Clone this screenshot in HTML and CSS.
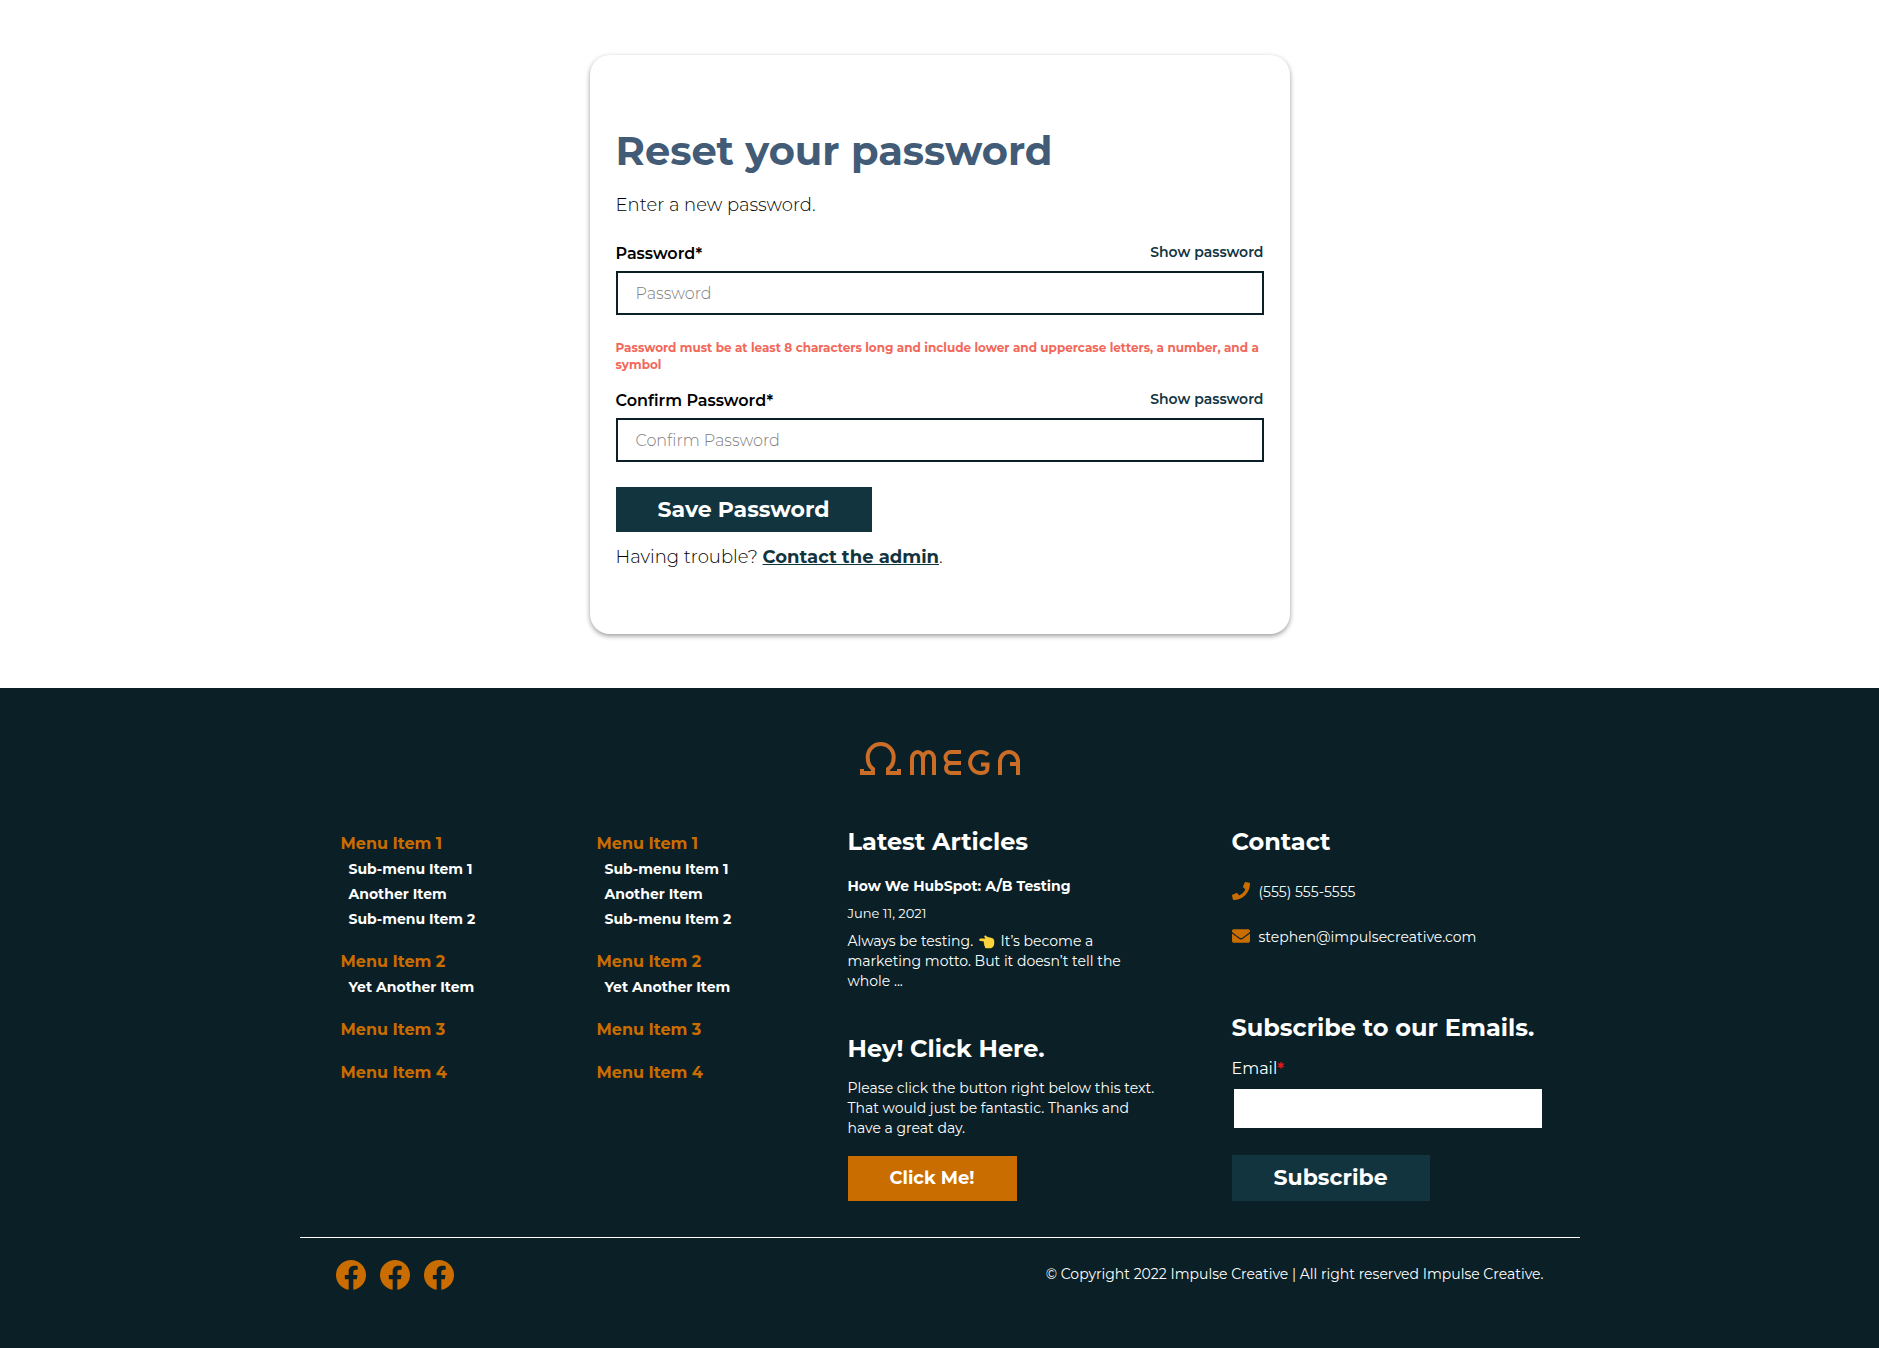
FILE: index.html
```html
<!DOCTYPE html>
<html lang="en">
<head>
<meta charset="utf-8">
<meta name="viewport" content="width=device-width, initial-scale=1">
<title>Reset your password</title>
<link rel="stylesheet" href="styles.css">
</head>
<body>
<svg class="sprite" aria-hidden="true">
  <symbol id="facebook" viewBox="8 8 496 496"><path d="M504 256C504 119 393 8 256 8S8 119 8 256c0 123.780 90.690 226.380 209.250 245V327.690h-63V256h63v-54.640c0-62.150 37-96.480 93.670-96.480 27.140 0 55.520 4.840 55.520 4.840v61h-31.280c-30.800 0-40.410 19.120-40.410 38.730V256h68.780l-11 71.690h-57.780V501C413.310 482.380 504 379.780 504 256z"/></symbol>
</svg>
<main class="page">
  <section class="card">
    <h1 class="card-title">Reset your password</h1>
    <p class="lead">Enter a new password.</p>
    <form class="reset-form">
      <div class="label-row">
        <label for="password">Password*</label>
        <a class="toggle" href="#">Show password</a>
      </div>
      <input class="field" id="password" type="password" placeholder="Password">
      <p class="error">Password must be at least 8 characters long and include lower and uppercase letters, a number, and a symbol</p>
      <div class="label-row">
        <label for="confirm">Confirm Password*</label>
        <a class="toggle" href="#">Show password</a>
      </div>
      <input class="field" id="confirm" type="password" placeholder="Confirm Password">
      <button class="button" type="submit">Save Password</button>
    </form>
    <p class="help">Having trouble? <a href="#">Contact the admin</a>.</p>
  </section>
</main>
<footer class="footer">
  <a class="logo" href="#" aria-label="Omega">
    <svg width="160" height="33" viewBox="0 0 160 33" fill="none" stroke="#cb6d26" stroke-width="4">
      <path d="M2 27v4h11v-4C9 24.500 7.700 20 7.700 15a13 13 0 0 1 26 0c0 5-1.700 9.500-5.700 12v4h11v-4"/>
      <path d="M52 33V17a5.500 7 0 0 1 11 0v16M63 17a5.500 7 0 0 1 11 0v16"/>
      <path d="M101 10H91a5.500 5.500 0 0 0 0 11h10M91 21a5 5 0 0 0 0 10h10"/>
      <path d="M128 13A10.500 10.500 0 1 0 121 31C126 31 127.500 29 127.500 25V22.500H121"/>
      <path d="M140 33V20a9 10 0 0 1 18 0v13M158 22h-8"/>
    </svg>
  </a>
  <div class="columns">
    <nav aria-label="Footer menu one">
      <ul class="menu">
        <li><a href="#">Menu Item 1</a>
          <ul class="submenu"><li><a href="#">Sub-menu Item 1</a></li><li><a href="#">Another Item</a></li><li><a href="#">Sub-menu Item 2</a></li></ul></li>
        <li><a href="#">Menu Item 2</a>
          <ul class="submenu"><li><a href="#">Yet Another Item</a></li></ul></li>
        <li><a href="#">Menu Item 3</a></li>
        <li><a href="#">Menu Item 4</a></li>
      </ul>
    </nav>
    <nav aria-label="Footer menu two">
      <ul class="menu">
        <li><a href="#">Menu Item 1</a>
          <ul class="submenu"><li><a href="#">Sub-menu Item 1</a></li><li><a href="#">Another Item</a></li><li><a href="#">Sub-menu Item 2</a></li></ul></li>
        <li><a href="#">Menu Item 2</a>
          <ul class="submenu"><li><a href="#">Yet Another Item</a></li></ul></li>
        <li><a href="#">Menu Item 3</a></li>
        <li><a href="#">Menu Item 4</a></li>
      </ul>
    </nav>
    <div>
      <section class="articles">
        <h2>Latest Articles</h2>
        <h3><a href="#">How We HubSpot: A/B Testing</a></h3>
        <p class="date">June 11, 2021</p>
        <p>Always be testing. <svg class="hand" aria-hidden="true" width="16" height="14" viewBox="0 0 16 14"><path fill="#ffd43b" d="M1.500 3.500h5C6.300 2.700 5.200 2 5.200 1.200 5.500.4 6.500.2 7 .8c.9 1.200 2.500 1.500 4 1.800l2.500.7c1.300.6 1.800 2 1.800 4 0 3.800-1.500 6-4.300 6H7.500c-1.500 0-2-1-1.500-2-1-.5-1.200-1.500-.6-2.200C4.500 8.600 4.600 7.400 5 6.500L1.500 6a1.250 1.250 0 0 1 0-2.500z"/></svg> It’s become a marketing motto. But it doesn’t tell the whole ...</p>
      </section>
      <section class="promo">
        <h2>Hey! Click Here.</h2>
        <p>Please click the button right below this text. That would just be fantastic. Thanks and have a great day.</p>
        <button class="button button-accent" type="button">Click Me!</button>
      </section>
    </div>
    <div>
      <section class="contact">
        <h2>Contact</h2>
        <a class="contact-line" href="tel:5555555555"><svg width="18" height="18" viewBox="0 0 512 512" aria-hidden="true"><path d="M493.400 24.600l-104-24c-11.300-2.600-22.900 3.300-27.500 13.900l-48 112c-4.200 9.800-1.400 21.300 6.900 28l60.600 49.600c-36 76.700-98.900 140.500-177.200 177.200l-49.600-60.600c-6.800-8.300-18.200-11.100-28-6.900l-112 48C3.900 366.500-2 378.100.6 389.400l24 104C27.100 504.200 36.700 512 48 512c256.100 0 464-207.500 464-464 0-11.200-7.700-20.900-18.600-23.400z"/></svg><span>(555) 555-5555</span></a>
        <a class="contact-line" href="mailto:stephen@impulsecreative.com"><svg width="18" height="18" viewBox="0 0 512 512" aria-hidden="true"><path d="M502.300 190.800c3.900-3.100 9.700-.2 9.700 4.700V400c0 26.500-21.500 48-48 48H48c-26.500 0-48-21.500-48-48V195.600c0-5 5.700-7.800 9.700-4.700 22.400 17.400 52.100 39.500 154.100 113.600 21.100 15.400 56.700 47.800 92.200 47.600 35.700.3 72-32.800 92.300-47.600 102-74.100 131.600-96.300 154-113.700zM256 320c23.200.4 56.600-29.200 73.400-41.400 132.700-96.300 142.800-104.700 173.400-128.700 5.800-4.500 9.200-11.500 9.200-18.900v-19c0-26.500-21.500-48-48-48H48c-26.500 0-48 21.500-48 48v19c0 7.400 3.400 14.300 9.200 18.900 30.600 23.900 40.700 32.400 173.400 128.700 16.800 12.200 50.200 41.800 73.400 41.400z"/></svg><span>stephen@impulsecreative.com</span></a>
      </section>
      <form class="subscribe">
        <h2>Subscribe to our Emails.</h2>
        <label for="email">Email<span class="required">*</span></label>
        <input id="email" type="email">
        <button class="button" type="submit">Subscribe</button>
      </form>
    </div>
  </div>
  <div class="legal">
    <div class="social">
      <a href="#" aria-label="Facebook"><svg width="30" height="30"><use href="#facebook"/></svg></a>
      <a href="#" aria-label="Facebook"><svg width="30" height="30"><use href="#facebook"/></svg></a>
      <a href="#" aria-label="Facebook"><svg width="30" height="30"><use href="#facebook"/></svg></a>
    </div>
    <p>© Copyright 2022 Impulse Creative | All right reserved Impulse Creative.</p>
  </div>
</footer>
</body>
</html>
```
FILE: styles.css
```css
* { box-sizing: border-box; }

body {
  margin: 0;
  background: #fff;
  color: #000;
  font-family: Montserrat, Inter, "Noto Sans", sans-serif;
  font-size: 18px;
  font-weight: 300;
  line-height: 27px;
}

h1, h2, h3, p, ul { margin: 0; padding: 0; }
ul { list-style: none; }
a { color: inherit; text-decoration: none; }
.sprite { display: none; }

.page { padding: 55px 20px 54px; }

.card {
  max-width: 700px;
  margin: 0 auto;
  padding: 72px 26px 63px;
  border-radius: 20px;
  box-shadow: 0 2px 5px rgba(0, 0, 0, .4);
}

.card-title {
  color: #425b76;
  font-size: 40px;
  font-weight: 700;
  line-height: 48px;
}

.lead { margin-top: 17px; }
.reset-form { margin-top: 25px; }

.label-row {
  display: flex;
  justify-content: space-between;
  align-items: flex-start;
  font-size: 16px;
  font-weight: 600;
  line-height: 20px;
}

.toggle { color: #12343f; font-size: 14px; line-height: 16px; }

.field {
  display: block;
  width: 100%;
  height: 44px;
  margin-top: 7px;
  padding: 0 18px;
  border: 2px solid #0a2026;
  background: #fff;
  font: 300 16px Montserrat, Inter, "Noto Sans", sans-serif;
}

.field::placeholder { color: #808080; }

.error {
  margin: 24px 0 18px;
  color: #f2685a;
  font-size: 12px;
  font-weight: 700;
  line-height: 17px;
}

.button {
  display: block;
  height: 45px;
  margin-top: 25px;
  padding: 0 42px;
  border: 0;
  background: #12343f;
  color: #fff;
  font: 700 22px Montserrat, Inter, "Noto Sans", sans-serif;
  white-space: nowrap;
}

.help { margin-top: 12px; }
.help a { color: #12343f; font-weight: 700; text-decoration: underline; }

.footer {
  padding: 54px 20px 58px;
  background: #0a2026;
  color: #fff;
  font-size: 14px;
  font-weight: 400;
  line-height: 20px;
}

.footer .button { padding-bottom: 2px; }

.logo { display: block; width: 160px; margin: 0 auto; }
.logo svg { display: block; }

.columns {
  display: grid;
  grid-template-columns: 2fr 2fr 3fr 3fr;
  max-width: 1280px;
  margin: 51px auto 0;
  padding-bottom: 36px;
}

.columns > * { min-width: 0; padding: 0 36px; }
.columns > nav { padding: 5px 0 0 41px; }

.footer h2 { font-size: 24px; font-weight: 700; line-height: 32px; }
.footer h3 { margin-top: 18px; font-size: 14px; font-weight: 700; line-height: 20px; }

.menu { display: grid; gap: 17px; color: #ca6d00; font-size: 16px; font-weight: 700; line-height: 26px; }
.submenu { padding-left: 8px; color: #fff; font-size: 14px; line-height: 25px; }
.menu a { display: block; }

.articles p { margin-top: 8px; }
.articles .date { margin-top: 7px; font-size: 13px; }
.hand { margin: 0 2px; vertical-align: -3px; }

.promo { margin-top: 42px; }
.promo p { margin-top: 13px; }
.button-accent { margin-top: 18px; background: #ca6d00; font-size: 18px; }

.contact-line { display: flex; gap: 9px; margin-top: 24px; line-height: 21px; }
.contact-line svg { fill: #ca6d00; }

.subscribe { margin-top: 64px; }
.subscribe label { display: block; margin-top: 15px; font-size: 16px; }
.required { color: #e01919; font-weight: 600; }
.subscribe input {
  display: block;
  width: 100%;
  height: 43px;
  margin-top: 8px;
  border: 2px solid #0a2026;
  background: #fff;
}
.subscribe .button { height: 46px; }

.legal {
  display: flex;
  justify-content: space-between;
  align-items: flex-start;
  max-width: 1280px;
  margin: 0 auto;
  padding: 22px 36px 0;
  border-top: 1px solid #fff;
  line-height: 28px;
}

.social { display: flex; gap: 14px; fill: #ca6d00; }
.social svg { display: block; }
```
